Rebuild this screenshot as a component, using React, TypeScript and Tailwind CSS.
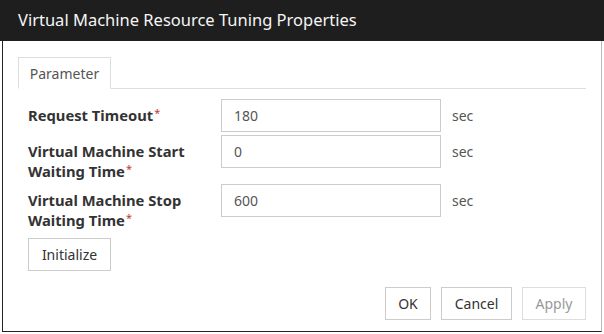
import React from "react";

const Req = () => <span className="text-[#c0392b] text-[11px] font-normal leading-[11px] align-top relative top-[2px] ml-[1px]">*</span>;

function Row({ label, value }: { label: React.ReactNode; value: string }) {
  return (
    <div className="flex items-start">
      <div className="w-[193px] pt-[6px] text-[14.75px] leading-[20px] font-bold text-[#333]">{label}</div>
      <div className="w-[220px] h-[33px] border border-[#cccccc] flex items-center px-[12px] text-[14px] text-[#555]">{value}</div>
      <div className="ml-[11px] h-[33px] flex items-center text-[14px] text-[#555]">sec</div>
    </div>
  );
}

export default function App() {
  return (
    <div className="w-[604px] h-[334px] bg-white overflow-hidden" style={{ fontFamily: '"Noto Sans", "Open Sans", sans-serif' }}>
      <div className="h-[41px] bg-[#1e1e1e] flex items-center pl-[18px] text-[16.5px] text-[#f5f5f5]">
        Virtual Machine Resource Tuning Properties
      </div>
      <div className="ml-[2px] w-[600px] h-[291px] border-l border-b border-r border-l-[#222] border-b-[#222] border-r-[#bbbbbb] flex flex-col pl-[15px] pr-[15px] pt-[16px]">
        <div className="flex border-b border-[#dddddd] h-[32px]">
          <div className="w-[93px] h-[32px] -mb-px border border-[#dddddd] border-b-white bg-white flex items-center justify-center text-[14px] text-[#555]">
            Parameter
          </div>
        </div>
        <div className="pl-[10px] pt-[10px] flex flex-col gap-[3px]">
          <Row label={<>Request Timeout<Req /></>} value="180" />
          <Row label={<>Virtual Machine Start<br />Waiting Time<Req /></>} value="0" />
          <Row label={<>Virtual Machine Stop<br />Waiting Time<Req /></>} value="600" />
        </div>
        <div className="pl-[10px] mt-[8px]">
          <button className="w-[83px] h-[33px] border border-[#cccccc] text-[14px] text-[#333] bg-white">Initialize</button>
        </div>
        <div className="flex justify-end gap-[10px] mt-[16px]">
          <button className="w-[46px] h-[33px] border border-[#cccccc] text-[14px] text-[#333] bg-white">OK</button>
          <button className="w-[71px] h-[33px] border border-[#cccccc] text-[14px] text-[#333] bg-white">Cancel</button>
          <button className="w-[64px] h-[33px] border border-[#dddddd] text-[14px] text-[#999] bg-white">Apply</button>
        </div>
      </div>
    </div>
  );
}
